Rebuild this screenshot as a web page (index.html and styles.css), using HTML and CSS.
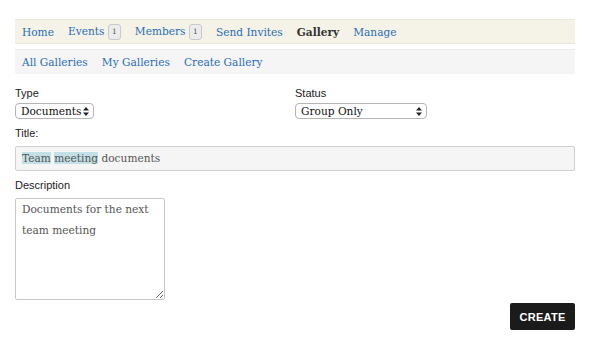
FILE: index.html
```html
<!DOCTYPE html>
<html lang="en">
<head>
  <meta charset="UTF-8" />
  <meta name="viewport" content="width=device-width, initial-scale=1.0"/>
  <title>Create Gallery</title>
  <link rel="stylesheet" href="styles.css">
</head>
<body>

<div class="page">
  <nav class="main-nav">
    <a href="#">Home</a>
    <a href="#">Events <span class="badge">1</span></a>
    <a href="#">Members <span class="badge">1</span></a>
    <a href="#">Send Invites</a>
    <a href="#" class="active">Gallery</a>
    <a href="#">Manage</a>
  </nav>

  <nav class="sub-nav">
    <a href="#">All Galleries</a>
    <a href="#">My Galleries</a>
    <a href="#">Create Gallery</a>
  </nav>

  <form class="gallery-form">
    <div class="row">
      <div class="field">
        <label for="type">Type</label>
        <div class="select-wrap type-select">
          <select id="type">
            <option>Documents</option>
            <option>Photos</option>
          </select>
          <svg class="arrows" width="6" height="9" viewBox="0 0 6 9"><path d="M3 0 L6 3.5 H0 Z M3 9 L6 5.5 H0 Z" fill="#222"/></svg>
        </div>
      </div>
      <div class="field">
        <label for="status">Status</label>
        <div class="select-wrap status-select">
          <select id="status">
            <option>Group Only</option>
            <option>Public</option>
          </select>
          <svg class="arrows" width="6" height="9" viewBox="0 0 6 9"><path d="M3 0 L6 3.5 H0 Z M3 9 L6 5.5 H0 Z" fill="#222"/></svg>
        </div>
      </div>
    </div>

    <div class="field title-field">
      <label for="title">Title:</label>
      <div class="text-input" id="title"><span class="hl">Team</span> <span class="hl">meeting</span> documents</div>
    </div>

    <div class="field desc-field">
      <label for="desc">Description</label>
      <textarea id="desc">Documents for the next team meeting</textarea>
    </div>

    <div class="actions">
      <button type="button" class="btn">CREATE</button>
    </div>
  </form>
</div>

</body>
</html>
```

FILE: styles.css
```css
* {
  box-sizing: border-box;
}

body {
  margin: 0;
  padding: 0;
  background-color: #fff;
  font-family: "DejaVu Serif", serif;
}

.page {
  width: 560px;
  margin: 0 0 0 15px;
  padding-top: 19px;
}

a {
  color: #2a6db5;
  text-decoration: none;
}

.main-nav,
.sub-nav {
  display: flex;
  align-items: center;
  gap: 14px;
  padding: 0 7px;
  font-size: 10.6px;
}

.main-nav {
  height: 25px;
  background-color: #f5f3e7;
  border-top: 1px solid #ebe9de;
  border-bottom: 1px solid #ebe9de;
  margin-bottom: 5px;
}

.main-nav .active {
  color: #333;
  font-weight: bold;
}

.badge {
  display: inline-block;
  min-width: 13px;
  height: 16px;
  line-height: 14px;
  font-size: 7.5px;
  color: #555;
  text-align: center;
  vertical-align: middle;
  background-color: #ececec;
  border: 1px solid #c9c9c9;
  border-radius: 3px;
}

.sub-nav {
  height: 25px;
  background-color: #f5f5f5;
  border-top: 1px solid #ebebeb;
}

.gallery-form {
  padding-top: 13px;
}

.row {
  display: grid;
  grid-template-columns: 1fr 1fr;
}

.field {
  margin-bottom: 8px;
}

label {
  display: block;
  font-family: "Liberation Sans", Arial, sans-serif;
  font-size: 11px;
  line-height: 13px;
  color: #222;
  margin-bottom: 3px;
}

.select-wrap {
  position: relative;
  height: 16px;
}

.select-wrap select {
  display: block;
  appearance: none;
  -webkit-appearance: none;
  width: 100%;
  height: 16px;
  padding: 0 0 0 5px;
  font-family: "DejaVu Serif", serif;
  font-size: 10.6px;
  line-height: 14px;
  color: #111;
  background-color: #fff;
  border: 1px solid #b5b5b5;
  border-radius: 4px;
}

.select-wrap .arrows {
  position: absolute;
  right: 5px;
  top: 4px;
  pointer-events: none;
}

.type-select {
  width: 79px;
}

.status-select {
  width: 132px;
}

.title-field label,
.desc-field label {
  margin-bottom: 6px;
}

.text-input {
  height: 25px;
  padding: 0 6px;
  font-size: 10.6px;
  line-height: 23px;
  color: #555;
  background-color: #f5f5f5;
  border: 1px solid #cfcfcf;
  border-radius: 2px;
}

.hl {
  background-color: #c3e0e6;
}

textarea {
  display: block;
  width: 150px;
  height: 102px;
  padding: 0 6px;
  font-family: "DejaVu Serif", serif;
  font-size: 10.6px;
  line-height: 21px;
  color: #555;
  border: 1px solid #c9c9c9;
  border-radius: 2px;
  resize: both;
}

.desc-field {
  margin-bottom: 3px;
}

.actions {
  display: flex;
  justify-content: flex-end;
}

.btn {
  height: 27px;
  width: 65px;
  padding: 0;
  font-family: "Liberation Sans", Arial, sans-serif;
  font-size: 11px;
  font-weight: bold;
  letter-spacing: 0.3px;
  color: #fff;
  background-color: #1b1b1b;
  border: none;
  border-radius: 2px;
}
```
